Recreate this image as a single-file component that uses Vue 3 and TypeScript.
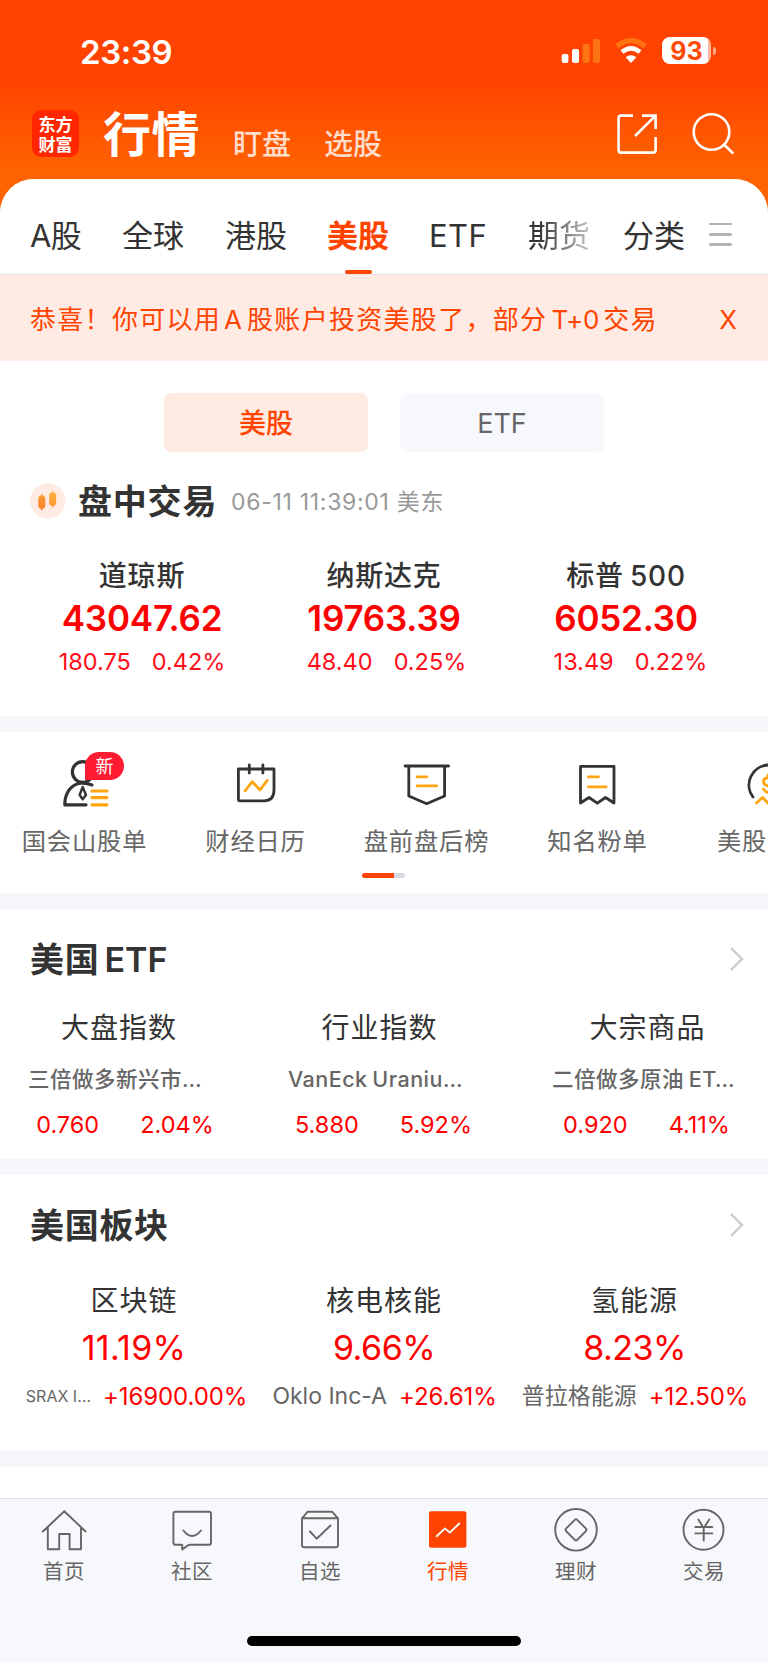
<script setup lang="ts">
interface Quote { name: string; price: string; change: string; pct: string }
interface Fund { title: string; name: string; price: string; pct: string }
interface Sector { title: string; pct: string; leader: string; gain: string; small?: boolean }

const tabs: { label: string; cls?: string }[] = [
  { label: 'A股', cls: 't-a' },
  { label: '全球', cls: 't-global' },
  { label: '港股', cls: 't-hk' },
  { label: '美股', cls: 't-us active' },
  { label: 'ETF', cls: 't-etf' },
  { label: '期货', cls: 't-fut' },
  { label: '分类', cls: 't-cat' },
]

const quotes: Quote[] = [
  { name: '道琼斯', price: '43047.62', change: '180.75', pct: '0.42%' },
  { name: '纳斯达克', price: '19763.39', change: '48.40', pct: '0.25%' },
  { name: '标普 500', price: '6052.30', change: '13.49', pct: '0.22%' },
]

const funds: Fund[] = [
  { title: '大盘指数', name: '三倍做多新兴市…', price: '0.760', pct: '2.04%' },
  { title: '行业指数', name: 'VanEck Uraniu…', price: '5.880', pct: '5.92%' },
  { title: '大宗商品', name: '二倍做多原油 ET…', price: '0.920', pct: '4.11%' },
]

const sectors: Sector[] = [
  { title: '区块链', pct: '11.19%', leader: 'SRAX I…', gain: '+16900.00%', small: true },
  { title: '核电核能', pct: '9.66%', leader: 'Oklo Inc-A', gain: '+26.61%' },
  { title: '氢能源', pct: '8.23%', leader: '普拉格能源', gain: '+12.50%' },
]
</script>

<template>
  <div class="screen">
    <header class="top">
      <div class="status">
        <span class="clock">23:39</span>
        <svg class="signal" viewBox="561 38 40 26">
          <rect x="561.7" y="54" width="6.7" height="9" rx="2" fill="#fff" />
          <rect x="572" y="49" width="7" height="14" rx="2" fill="#fff" />
          <rect x="582.7" y="44" width="7" height="19" rx="2" fill="#ff7412" />
          <rect x="593" y="39" width="7" height="24" rx="2" fill="#ff7412" />
        </svg>
        <svg class="wifi" viewBox="614 38 34 26">
          <path d="M616.8 46.3 Q631 34.8 645.2 46.3" fill="none" stroke="#ff7412" stroke-width="5" />
          <path d="M622 52 Q631 44.6 640 52" fill="none" stroke="#fff" stroke-width="4.6" />
          <path d="M625.6 57.3 Q631 53.2 636.4 57.3 L631 63 Z" fill="#fff" />
        </svg>
        <div class="battery"><span>93</span></div>
        <i class="tip"></i>
      </div>
      <div class="nav">
        <div class="logo">东方<br />财富</div>
        <h1>行情</h1>
        <span class="sub s1">盯盘</span>
        <span class="sub s2">选股</span>
        <svg class="share" viewBox="616 112 43 43" fill="none" stroke="#fff" stroke-width="2.6">
          <path d="M633 115.6 H621 Q618.6 115.6 618.6 118 V150 Q618.6 152.6 621 152.6 H653 Q655.6 152.6 655.6 150 V137" />
          <path d="M642 115.6 H655.6 V129 M655 116.2 L635 136" />
        </svg>
        <svg class="search" viewBox="691 112 44 44" fill="none" stroke="#fff" stroke-width="2.6">
          <circle cx="711.5" cy="132" r="17.8" />
          <path d="M724 144.5 L733.3 153.6" />
        </svg>
      </div>
    </header>

    <main>
      <nav class="tabs">
        <span v-for="t in tabs" :key="t.label" class="tab" :class="t.cls">{{ t.label }}</span>
        <span class="menu"><i></i><i></i><i></i></span>
      </nav>

      <div class="banner">
        <span>恭喜！你可以用<b>A</b>股账户投资美股了，部分<b class="t0">T+0</b>交易</span>
        <span class="close">X</span>
      </div>

      <section class="market">
        <div class="toggle">
          <button class="on">美股</button>
          <button>ETF</button>
        </div>
        <div class="session">
          <svg viewBox="30 483 36 36">
            <defs>
              <linearGradient id="candle" x1="0" y1="1" x2="0" y2="0">
                <stop offset="0" stop-color="#ff7a22" />
                <stop offset="1" stop-color="#f9a33a" />
              </linearGradient>
              <linearGradient id="candle2" x1="0" y1="1" x2="0" y2="0">
                <stop offset="0" stop-color="#ff9428" />
                <stop offset="1" stop-color="#ffb34a" />
              </linearGradient>
            </defs>
            <circle cx="47.7" cy="501" r="17.7" fill="#ffebe2" />
            <path d="M41.8 493.5 L42.8 495.5 Q45.3 496 45.3 498 V506 Q45.3 508 42.8 508.7 L41.8 511 L40.8 508.7 Q38.3 508 38.3 506 V498 Q38.3 496 40.8 495.5 Z" fill="url(#candle)" />
            <path d="M52.7 490 L53.7 492.5 Q56.2 493 56.2 495 V503 Q56.2 505 53.7 505.7 L52.7 508 L51.7 505.7 Q49.2 505 49.2 503 V495 Q49.2 493 51.7 492.5 Z" fill="url(#candle2)" />
          </svg>
          <h2>盘中交易</h2>
          <time>06-11 11:39:01 美东</time>
        </div>
        <div class="quotes">
          <div v-for="q in quotes" :key="q.name" class="quote">
            <div class="q-name">{{ q.name }}</div>
            <div class="q-price">{{ q.price }}</div>
            <div class="q-move"><span>{{ q.change }}</span><span>{{ q.pct }}</span></div>
          </div>
        </div>
      </section>

      <section class="tools">
        <div class="tool-row">
          <div class="tool">
            <svg viewBox="53 756 64 56" fill="none" stroke="#333" stroke-width="3.2" stroke-linecap="round" stroke-linejoin="round">
              <circle cx="82.7" cy="772" r="10.3" />
              <path d="M92 785 Q86 782.5 80 783.2 C70 785 64.8 794 64.8 804.8 H86" />
              <path d="M82.7 787 L79.6 795 L82.7 799.2 L86 795 Z" stroke-width="2.4" />
              <path d="M92 791 H107 M92 797.6 H107 M92 804.8 H107" stroke="#ffa50f" />
            </svg>
            <em>新</em>
            <span>国会山股单</span>
          </div>
          <div class="tool">
            <svg viewBox="224 756 64 56" fill="none" stroke="#333" stroke-width="2.8" stroke-linecap="round" stroke-linejoin="round">
              <path d="M238.4 769 H274 V790 Q274 800.8 264 800.8 H240 Q238.4 800.8 238.4 799 Z M249.3 765 V773 M262.9 765 V773" />
              <path d="M245 791 L252.3 781.7 L260 790 L267.3 780.4" stroke="#ffa50f" />
            </svg>
            <span>财经日历</span>
          </div>
          <div class="tool">
            <svg viewBox="395 756 64 56" fill="none" stroke="#333" stroke-width="2.8" stroke-linecap="round" stroke-linejoin="round">
              <path d="M405 766 H448.6 M408.8 767 V796 L426.7 803.7 L444.6 796 V767" />
              <path d="M417 776.8 H427 M417 785.8 H436.6" stroke="#ffa50f" />
            </svg>
            <span>盘前盘后榜</span>
          </div>
          <div class="tool">
            <svg viewBox="566 756 64 56" fill="none" stroke="#333" stroke-width="2.8" stroke-linecap="round" stroke-linejoin="round">
              <path d="M580.5 766.3 H614 V803 L605.5 797.5 L597.3 803.2 L589 797.5 L580.5 803 Z" />
              <path d="M588.4 776.9 H598.4 M588.4 786.8 H606.2" stroke="#ffa50f" />
            </svg>
            <span>知名粉单</span>
          </div>
          <div class="tool last">
            <svg viewBox="737 756 64 56" fill="none" stroke="#333" stroke-width="2.8" stroke-linecap="round" stroke-linejoin="round">
              <path d="M753 797 A20 20 0 0 1 768 765" />
              <path d="M774 779 C768 776 763.5 778 763.5 782 C763.5 787 773 785 773 791 C773 794 767 794 763.5 789 M768 775 V778 M756.5 803 L762.5 797.5 L769 804" stroke="#ffa50f" />
            </svg>
            <span>美股</span>
          </div>
        </div>
        <div class="pager"><i></i></div>
      </section>

      <section class="funds">
        <div class="head">
          <h3>美国<b>ETF</b></h3>
          <svg viewBox="0 0 16 26"><path d="M2 2 L13 13 L2 24" fill="none" stroke="#ccc" stroke-width="2.4" /></svg>
        </div>
        <div class="fund-grid">
          <div v-for="f in funds" :key="f.title" class="fund">
            <div class="f-title">{{ f.title }}</div>
            <div class="f-name">{{ f.name }}</div>
            <div class="f-val"><span>{{ f.price }}</span><span>{{ f.pct }}</span></div>
          </div>
        </div>
      </section>

      <section class="sectors">
        <div class="head">
          <h3>美国板块</h3>
          <svg viewBox="0 0 16 26"><path d="M2 2 L13 13 L2 24" fill="none" stroke="#ccc" stroke-width="2.4" /></svg>
        </div>
        <div class="sector-grid">
          <div v-for="s in sectors" :key="s.title" class="sector">
            <div class="s-title">{{ s.title }}</div>
            <div class="s-pct">{{ s.pct }}</div>
            <div class="s-lead">
              <span class="who" :class="{ small: s.small }">{{ s.leader }}</span><span class="gain">{{ s.gain }}</span>
            </div>
          </div>
        </div>
      </section>
      <div class="filler"></div>
    </main>

    <footer>
      <div class="dock">
        <div class="dock-item">
          <svg viewBox="40 1506 48 48">
            <path d="M42.8 1531.5 L64.3 1511.3 L85.6 1531.5 M47.8 1527 V1549.3 H59.2 V1534 H69.6 V1549.3 H81 V1527" />
          </svg>
          <span>首页</span>
        </div>
        <div class="dock-item">
          <svg viewBox="168 1506 48 48">
            <path d="M175.5 1511.8 H209 Q211 1511.8 211 1514 V1542.5 Q211 1544.8 209 1544.8 H189 L182.2 1549.4 V1544.8 H175.5 Q173.4 1544.8 173.4 1542.5 V1514 Q173.4 1511.8 175.5 1511.8 Z M183.4 1530.5 Q192 1541.5 201 1530.5" />
          </svg>
          <span>社区</span>
        </div>
        <div class="dock-item">
          <svg viewBox="296 1506 48 48">
            <path d="M302 1518.3 L307.5 1511.8 H332.3 L338 1518.3 V1545 Q338 1547.2 335.8 1547.2 H304.2 Q302 1547.2 302 1545 Z M302 1518.3 H338 M310 1531.5 L316.7 1538.7 L330.5 1525.5" />
          </svg>
          <span>自选</span>
        </div>
        <div class="dock-item current">
          <svg viewBox="424 1506 48 48">
            <rect x="429" y="1511.2" width="37.4" height="36.6" rx="2" fill="#ff4400" stroke="none" />
            <path d="M436.7 1536.2 L445 1528.4 L449.8 1532.6 L459.3 1523.5" stroke="#fff" />
          </svg>
          <span>行情</span>
        </div>
        <div class="dock-item">
          <svg viewBox="552 1506 48 48">
            <circle cx="576" cy="1529.8" r="20.8" />
            <path d="M574.8 1519.8 Q576 1518.6 577.2 1519.8 L586 1528.7 Q587 1529.8 586 1531 L577.2 1539.8 Q576 1541 574.8 1539.8 L566 1531 Q565 1529.8 566 1528.7 Z" />
          </svg>
          <span>理财</span>
        </div>
        <div class="dock-item">
          <svg viewBox="680 1506 48 48">
            <circle cx="703.5" cy="1529.7" r="20" />
            <path d="M698.3 1519.5 L703.7 1528 L709.3 1519.5 M703.7 1528 V1540.5 M695.3 1527 H712.3 M695.3 1533.4 H712.3" />
          </svg>
          <span>交易</span>
        </div>
      </div>
      <div class="home"></div>
    </footer>
  </div>
</template>

<style>
body { margin: 0; background: #fff; }
</style>

<style scoped>
* { box-sizing: border-box; }
.screen {
  width: 768px;
  height: 1663px;
  overflow: hidden;
  display: flex;
  flex-direction: column;
  background: #fff;
  color: #333;
  font-family: Inter, "Noto Sans CJK SC", sans-serif;
}
h1, h2, h3 { margin: 0; }
svg { display: block; flex: none; }

.top {
  height: 220px;
  flex: none;
  background: linear-gradient(#ff4200 75px, #ff6200 170px);
}
.status { height: 75px; padding: 37px 0 0 80px; display: flex; align-items: flex-start; }
.clock { width: 481px; font-size: 33px; line-height: 30px; font-weight: 600; color: #fff; letter-spacing: -.4px; }
.signal { width: 40px; height: 26px; margin-top: 1px; }
.wifi { width: 34px; height: 26px; margin: 1px 0 0 13px; }
.battery {
  margin-left: 14px; width: 49px; height: 27px; border-radius: 8px;
  background: linear-gradient(90deg, #fff 46px, #ffb59a 46px);
  color: #ff4a08; font-size: 25px; line-height: 28px; font-weight: 700; text-align: center;
}
.tip { width: 3px; height: 8px; margin: 10px 0 0 2px; border-radius: 0 4px 4px 0; background: #ffa585; }
.nav { height: 100px; display: flex; padding: 35px 0 0 32px; color: #fff; }
.logo {
  width: 47px; height: 47px; border-radius: 9px; background: #ff2600; padding-top: 4px;
  font-family: "Noto Sans CJK SC", sans-serif; font-weight: 700; font-size: 17px; line-height: 20px;
  text-align: center; white-space: nowrap;
}
h1 { width: 130px; margin-left: 24px; font-size: 48px; line-height: 49px; font-weight: 700; letter-spacing: .6px; }
.sub { font-size: 29px; line-height: 69px; font-weight: 500; color: #ffdccc; }
.s1 { width: 91px; }
.s2 { width: 292px; }
.share { width: 43px; height: 43px; margin-top: 2px; }
.search { width: 44px; height: 44px; margin: 2px 0 0 32px; }

main {
  position: relative;
  margin-top: -41px;
  flex: none;
  height: 1319px;
  background: #f6f7fa;
  border-radius: 34px 34px 0 0;
  overflow: hidden;
}
.tabs { height: 96px; background: #fff; border-bottom: 1px solid #e8e4e4; display: flex; padding-left: 30px; font-size: 31px; line-height: 114px; }
.tab { flex: none; height: 95px; white-space: nowrap; }
.t-a { width: 92px; letter-spacing: -.6px; }
.t-global { width: 103px; }
.t-hk { width: 102px; }
.t-us { width: 102px; }
.t-etf { width: 99px; letter-spacing: .4px; }
.t-fut { width: 95px; }
.t-cat { width: 85px; }
.active { color: #ff4400; font-weight: 700; position: relative; }
.active::after { content: ""; position: absolute; left: 18px; top: 91px; width: 27px; height: 4px; border-radius: 2px; background: #ff4400; }
.t-fut { background: linear-gradient(90deg, #333 10px, #ccc 64px); background-clip: text; -webkit-background-clip: text; color: transparent; }
.menu { display: flex; flex-direction: column; gap: 7.5px; padding-top: 43.5px; margin-left: 1px; }
.menu i { width: 23px; height: 2.8px; border-radius: 2px; background: #b3b3b3; }

.banner { height: 86px; background: #ffebe4; color: #ff4400; font-size: 26px; letter-spacing: 1.3px; line-height: 89px; padding: 0 31px 0 30px; display: flex; justify-content: space-between; white-space: nowrap; }
.banner b { font-weight: 400; margin: 0 5px 0 3px; letter-spacing: 0; }
.banner .t0 { margin: 0 4px; letter-spacing: -.2px; }
.close { letter-spacing: 0; }

.market { height: 355px; background: #fff; }
.toggle { display: flex; justify-content: center; gap: 32px; padding-top: 32px; }
button { width: 204px; height: 59px; border: 0; border-radius: 7px; background: #f7f8fb; color: #666; font: 400 27px/61px Inter, "Noto Sans CJK SC", sans-serif; padding: 0; }
.on { background: #ffebe2; color: #ff4400; font-weight: 500; }
.session { display: flex; padding: 31px 0 0 30px; height: 67px; }
.session svg { width: 36px; height: 36px; }
h2 { width: 153px; margin-left: 12px; font-size: 34px; line-height: 38px; font-weight: 600; letter-spacing: .8px; }
time { font-size: 23px; line-height: 38px; color: #999; white-space: nowrap; letter-spacing: .7px; }
.quotes { display: grid; grid-template-columns: 242px 242px 242px; padding: 39px 0 0 21px; text-align: center; white-space: nowrap; }
.q-name { font-size: 28px; line-height: 36px; font-weight: 500; letter-spacing: .8px; word-spacing: -2px; }
.q-price { font-size: 35px; line-height: 48px; font-weight: 600; color: #f00; letter-spacing: -.2px; }
.q-move { font-size: 23.5px; line-height: 40px; color: #ff0d19; display: flex; justify-content: center; gap: 21px; }
.quote:nth-child(2) .q-move { padding-left: 5px; }
.quote:nth-child(3) .q-move { padding-left: 9px; }

.tools { margin-top: 16px; height: 161px; background: #fff; overflow: hidden; }
.tool-row { display: flex; width: 855px; margin-left: -1px; }
.tool { width: 171px; height: 141px; padding-top: 24px; display: flex; flex-direction: column; align-items: center; position: relative; }
.tool svg { width: 64px; height: 56px; }
.tool span { font-size: 24.3px; line-height: 58px; letter-spacing: .8px; color: #666; white-space: nowrap; }
.tool em { position: absolute; left: 86px; top: 20px; width: 39px; height: 28px; border-radius: 14px 14px 14px 0; background: #ff1b32; color: #fff; font-style: normal; font-size: 18px; line-height: 29px; text-align: center; }
.last span { align-self: flex-start; margin-left: 34px; }
.pager { width: 43px; height: 5px; margin-left: 362px; border-radius: 3px; background: #d5d9e0; overflow: hidden; }
.pager i { display: block; width: 32px; height: 5px; background: #ff4400; }

.funds { margin-top: 16px; height: 250px; background: #fff; }
.head { display: flex; justify-content: space-between; padding: 30px 23px 0 30px; }
h3 { font-size: 34px; line-height: 41px; height: 40px; font-weight: 600; letter-spacing: .7px; }
h3 b { font-weight: 600; margin-left: 5px; letter-spacing: 0; }
.head svg { width: 16px; height: 26px; margin-top: 7px; }
.fund-grid { display: grid; grid-template-columns: 238px 283px 253px; padding-top: 30px; text-align: center; white-space: nowrap; }
.f-title, .s-title { font-size: 28px; line-height: 39px; height: 38px; letter-spacing: 1px; }
.f-name { font-size: 21.5px; line-height: 28px; margin-top: 18px; font-weight: 500; color: #666; letter-spacing: .5px; word-spacing: -1.5px; margin-left: -8px; }
.f-val { font-size: 23.5px; line-height: 31px; height: 30px; color: #f00; display: flex; justify-content: center; gap: 41px; margin: 16px 0 0 12px; }
.fund:nth-child(2) .f-val { margin-left: 8px; }
.fund:nth-child(3) .f-val { margin-left: -2px; }

.sectors { margin-top: 16px; height: 276px; background: #fff; }
.sector-grid { display: grid; grid-template-columns: 250px 250px 251px; padding: 37px 0 0 9px; text-align: center; white-space: nowrap; }
.s-pct { font-size: 34px; line-height: 51px; height: 50px; margin-top: 2px; color: #f00; letter-spacing: -.5px; }
.sector:first-child .s-pct { letter-spacing: .3px; }
.s-lead { height: 30px; margin-top: 9px; display: flex; justify-content: center; gap: 12px; font-size: 24px; align-items: center; padding-left: 1px; }
.sector:first-child .s-lead { padding-left: 5px; }
.s-lead span { line-height: 31px; }
.who { color: #666; font-size: 23px; }
.small { font-size: 16px; }
.gain { color: #f00; letter-spacing: -.1px; }
.filler { margin-top: 16px; height: 40px; background: #fff; }

footer { height: 164px; flex: none; background: #f7f8fb; border-top: 1px solid #dedee3; display: flex; flex-direction: column; align-items: center; }
.dock { display: flex; }
.dock-item { width: 128px; display: flex; flex-direction: column; align-items: center; padding-top: 7px; color: #666; font-size: 20.5px; letter-spacing: .6px; }
.dock-item span { line-height: 36px; height: 34px; }
.dock-item svg { width: 48px; height: 48px; fill: none; stroke: #666; stroke-width: 1.9; stroke-linecap: round; stroke-linejoin: round; }
.current { color: #ff4400; }
.home { width: 274px; height: 10px; border-radius: 5px; background: #000; margin-top: 48px; }
</style>
